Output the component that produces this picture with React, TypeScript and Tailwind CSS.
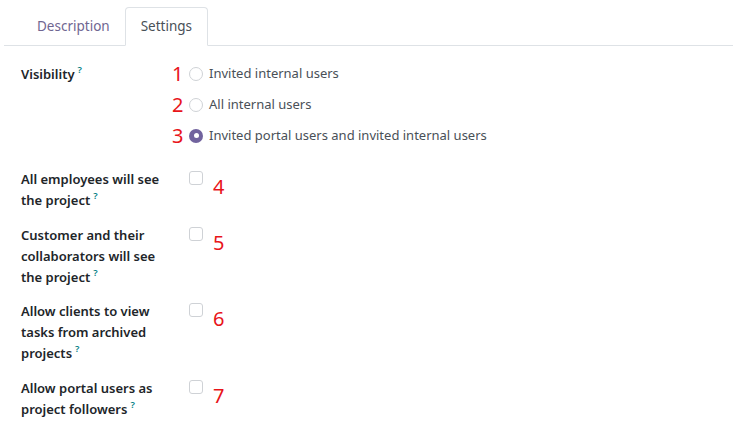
import React from "react";

const Q = () => (
  <span className="ml-[3px] inline-block align-top text-[9.5px] leading-[12px] font-semibold text-[#017e84]">?</span>
);

const Num = ({ n }: { n: string }) => (
  <span className="text-[20px] leading-none text-[#e8141a] font-['Noto_Sans',sans-serif]">{n}</span>
);

const Radio = ({ checked }: { checked?: boolean }) =>
  checked ? (
    <span className="inline-flex h-[14px] w-[14px] items-center justify-center rounded-full bg-[#71639e]">
      <span className="h-[5px] w-[5px] rounded-full bg-white" />
    </span>
  ) : (
    <span className="inline-block h-[14px] w-[14px] rounded-full border border-[#cfd2d6] bg-white" />
  );

const Check = () => (
  <span className="inline-block h-[14px] w-[14px] rounded-[3px] border border-[#cfd2d6] bg-white" />
);

const CheckRow = ({ lines, n, mt }: { lines: React.ReactNode; n: string; mt: string }) => (
  <div className={`flex ${mt}`}>
    <div className="w-[151px] font-semibold text-[#212529] leading-[21px]">{lines}</div>
    <div className="flex items-start pl-[17px] pt-[2px]">
      <Check />
      <span className="ml-[10px] mt-[6px]"><Num n={n} /></span>
    </div>
  </div>
);

export default function App() {
  return (
    <div className="w-[740px] h-[431px] bg-white font-['Noto_Sans',sans-serif] text-[13px] overflow-hidden">
      <div className="pt-[7px] px-[4px]">
        <div className="flex border-b border-[#dee2e6] pl-[18px] w-[729px]">
          <div className="h-[38px] px-[15px] flex items-center text-[13.5px] text-[#6f6691] -mb-px">Description</div>
          <div className="h-[39px] px-[15px] flex items-center text-[13.5px] text-[#495057] border border-[#dee2e6] border-b-white rounded-t-[4px] bg-white -mb-px">Settings</div>
        </div>
      </div>
      <div className="pl-[21px] pt-[17px]">
        <div className="flex">
          <div className="w-[151px] font-semibold text-[#212529] leading-[21px] pt-[1px]">
            Visibility<Q />
          </div>
          <div className="flex flex-col gap-[10px]">
            {[
              { n: "1", t: "Invited internal users" },
              { n: "2", t: "All internal users" },
              { n: "3", t: "Invited portal users and invited internal users", c: true },
            ].map((r) => (
              <div key={r.n} className="flex items-center h-[21px]">
                <span className="w-[12px] flex justify-start"><Num n={r.n} /></span>
                <span className="ml-[5px] flex"><Radio checked={r.c} /></span>
                <span className="ml-[6px] text-[#495057] leading-[21px]">{r.t}</span>
              </div>
            ))}
          </div>
        </div>
        <CheckRow
          mt="mt-[23px]"
          n="4"
          lines={<>All employees will see the project<Q /></>}
        />
        <CheckRow
          mt="mt-[14px]"
          n="5"
          lines={<>Customer and their collaborators will see the project<Q /></>}
        />
        <CheckRow
          mt="mt-[13px]"
          n="6"
          lines={<>Allow clients to view tasks from archived projects<Q /></>}
        />
        <CheckRow
          mt="mt-[14px]"
          n="7"
          lines={<>Allow portal users as project followers<Q /></>}
        />
      </div>
    </div>
  );
}
